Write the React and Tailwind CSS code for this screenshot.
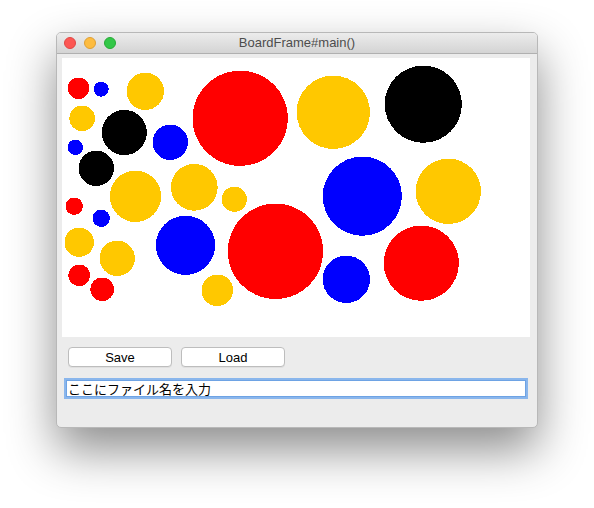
import React from 'react';

const RED = '#ff0000';
const BLUE = '#0000ff';
const YELLOW = '#ffc800';
const BLACK = '#000000';

// circles in page coordinates: [cx, cy, r, color]
const circles = [
  [78.5, 88.3, 10.8, RED],
  [101.2, 89.2, 7.5, BLUE],
  [145.3, 91.3, 18.7, YELLOW],
  [82.2, 118.3, 12.8, YELLOW],
  [124.3, 132.5, 22.6, BLACK],
  [170.3, 142.3, 17.7, BLUE],
  [75.3, 147.3, 7.7, BLUE],
  [96.3, 168.3, 17.7, BLACK],
  [240.2, 118.3, 47.6, RED],
  [333.3, 112.3, 36.7, YELLOW],
  [423.3, 104.2, 38.6, BLACK],
  [135.5, 196.3, 25.7, YELLOW],
  [194.3, 187.3, 23.4, YELLOW],
  [234.3, 199.2, 12.6, YELLOW],
  [362.3, 196.2, 39.6, BLUE],
  [448.3, 191.3, 32.7, YELLOW],
  [185.5, 245.3, 29.6, BLUE],
  [275.5, 251.3, 47.7, RED],
  [421.3, 263.2, 37.6, RED],
  [346.3, 279.3, 23.7, BLUE],
  [217.3, 290.3, 15.8, YELLOW],
  [74.2, 206.2, 8.7, RED],
  [101.2, 218.3, 8.7, BLUE],
  [79.2, 242.3, 14.7, YELLOW],
  [117.2, 258.3, 17.7, YELLOW],
  [79.2, 275.3, 10.8, RED],
  [102.2, 289.3, 11.8, RED],
];

const Board = () => (
  <div className="ml-[5px] mr-[7px] mt-[4px] h-[279px] bg-white">
    <svg width="468" height="279" viewBox="62 58 468 279" shapeRendering="crispEdges">
      {circles.map(([cx, cy, r, c], i) => (
        <circle key={i} cx={cx} cy={cy} r={r} fill={c} />
      ))}
    </svg>
  </div>
);

const Button = ({ children }) => (
  <button className="w-[104px] h-[20px] rounded-[4px] border border-[#bdbdbd] bg-white text-[13px] leading-none text-black shadow-[0_1px_0_rgba(0,0,0,0.05)]">
    {children}
  </button>
);

function App() {
  return (
    <div
      className="min-h-[508px] bg-white pt-[32px] pl-[56px]"
      style={{ fontFamily: '"Liberation Sans", "Noto Sans CJK JP", sans-serif' }}
    >
      <div className="w-[482px] h-[396px] rounded-[5px] bg-[#ececec] border border-[#b8b8b8] shadow-[0_22px_48px_rgba(0,0,0,0.45)] flex flex-col overflow-hidden">
        {/* title bar */}
        <div className="relative h-[21px] shrink-0 bg-gradient-to-b from-[#ececec] to-[#d4d4d4] border-b border-[#b0b0b0] flex items-center">
          <div className="flex items-center gap-[8px] pl-[7px]">
            <span className="w-[12px] h-[12px] rounded-full bg-[#fc5753] border border-[#df4744]" />
            <span className="w-[12px] h-[12px] rounded-full bg-[#fdbc40] border border-[#de9f34]" />
            <span className="w-[12px] h-[12px] rounded-full bg-[#33c748] border border-[#27aa35]" />
          </div>
          <div className="absolute inset-0 flex items-center justify-center text-[13px] text-[#4d4d4d]">
            BoardFrame#main()
          </div>
        </div>

        <Board />

        <div className="flex gap-[9px] pl-[11px] mt-[10px]">
          <Button>Save</Button>
          <Button>Load</Button>
        </div>

        <div className="ml-[7px] mt-[11px] w-[464px] h-[21px] bg-white border-2 border-[#8ab6ec] shadow-[inset_0_0_0_1px_#6ea3e4] flex items-center pl-[2px]">
          <span
            className="text-[13px] text-black leading-[15px] -mt-[1px]"
            style={{ fontFamily: '"Noto Sans CJK JP", sans-serif' }}
          >
            ここにファイル名を入力
          </span>
        </div>
      </div>
    </div>
  );
}

export default App;
